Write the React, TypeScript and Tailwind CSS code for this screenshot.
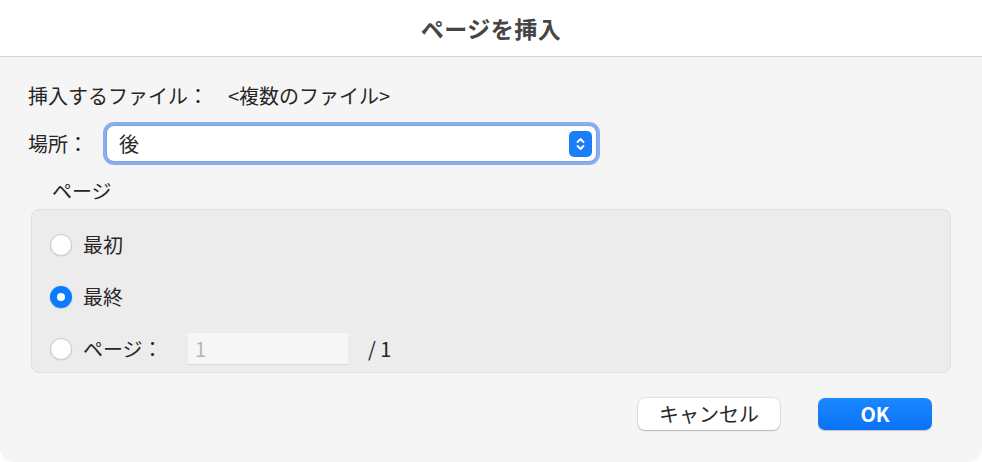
import React from 'react';

const font = { fontFamily: '"Noto Sans CJK JP", "Noto Sans", "Liberation Sans", sans-serif' };

function Radio({ checked }: { checked?: boolean }) {
  if (checked) {
    return (
      <span className="w-[22px] h-[22px] shrink-0 rounded-full bg-[#0b7bff] flex items-center justify-center shadow-[0_0.5px_1.5px_rgba(0,0,0,0.25)]">
        <span className="w-[8px] h-[8px] rounded-full bg-white" />
      </span>
    );
  }
  return (
    <span className="w-[22px] h-[22px] shrink-0 rounded-full bg-white border border-[#cdcdcd] shadow-[0_0.5px_1px_rgba(0,0,0,0.12)]" />
  );
}

export default function App() {
  return (
    <div className="w-[982px] h-[462px] bg-white text-[#262626]" style={font}>
      {/* Title bar */}
      <div className="h-[57px] bg-white border-b border-[#d6d6d6] flex items-center justify-center">
        <span className="text-[23px] font-bold text-[#454545] tracking-[0.5px]">ページを挿入</span>
      </div>

      {/* Body */}
      <div className="h-[405px] bg-[#f5f5f5] rounded-b-[14px] px-[28px] pt-[26px] flex flex-col">
        <div className="h-[26px] flex items-center text-[20px]">
          <span className="w-[200px]">挿入するファイル：</span>
          <span>&lt;複数のファイル&gt;</span>
        </div>

        <div className="mt-[13px] h-[43px] flex items-center text-[20px]">
          <span className="w-[75px]">場所：</span>
          <div className="w-[497px] h-[43px] rounded-[11px] bg-[#86aff0] p-[4px]">
            <div className="h-full rounded-[7px] bg-white flex items-center justify-between pl-[12px] pr-[4px] shadow-[0_0_0_0.5px_rgba(0,0,0,0.15)]">
              <span>後</span>
              <span className="w-[23px] h-[26px] rounded-[5px] bg-[#1a7ef7] flex items-center justify-center">
                <svg width="11" height="16" viewBox="0 0 11 16" fill="none" stroke="white" strokeWidth="1.8" strokeLinecap="round" strokeLinejoin="round">
                  <path d="M2.5 6 L5.5 3 L8.5 6" />
                  <path d="M2.5 10 L5.5 13 L8.5 10" />
                </svg>
              </span>
            </div>
          </div>
        </div>

        <div className="mt-[14px] h-[24px] pl-[24px] flex items-center text-[20px]">ページ</div>

        <div className="mt-[6px] ml-[3px] w-[920px] h-[164px] rounded-[8px] bg-[#ececec] border border-[#e0e0e0] px-[18px] pt-[23px] flex flex-col">
          <div className="h-[24px] flex items-center gap-[11px] text-[20px]">
            <Radio />
            <span>最初</span>
          </div>
          <div className="mt-[28px] h-[24px] flex items-center gap-[11px] text-[20px]">
            <Radio checked />
            <span>最終</span>
          </div>
          <div className="mt-[24px] h-[32px] flex items-center text-[20px]">
            <Radio />
            <span className="ml-[11px] w-[105px]">ページ：</span>
            <div className="w-[160px] h-[32px] bg-[#f6f6f6] border-b border-[#dadada] flex items-center pl-[7px] text-[#b5b5b5]">1</div>
            <span className="ml-[20px]">/ 1</span>
          </div>
        </div>

        <div className="mt-[25px] flex justify-end pr-[22px] gap-[38px]">
          <button className="w-[142px] h-[32px] rounded-[7px] bg-white text-[20px] text-[#262626] shadow-[0_0_0_0.5px_rgba(0,0,0,0.15),0_1px_1.5px_rgba(0,0,0,0.2)] flex items-center justify-center">
            キャンセル
          </button>
          <button className="w-[114px] h-[32px] rounded-[7px] bg-gradient-to-b from-[#1b87ff] to-[#0a72f5] text-white text-[20px] font-bold flex items-center justify-center shadow-[0_0.5px_1px_rgba(0,0,0,0.2)]">
            OK
          </button>
        </div>
      </div>
    </div>
  );
}
